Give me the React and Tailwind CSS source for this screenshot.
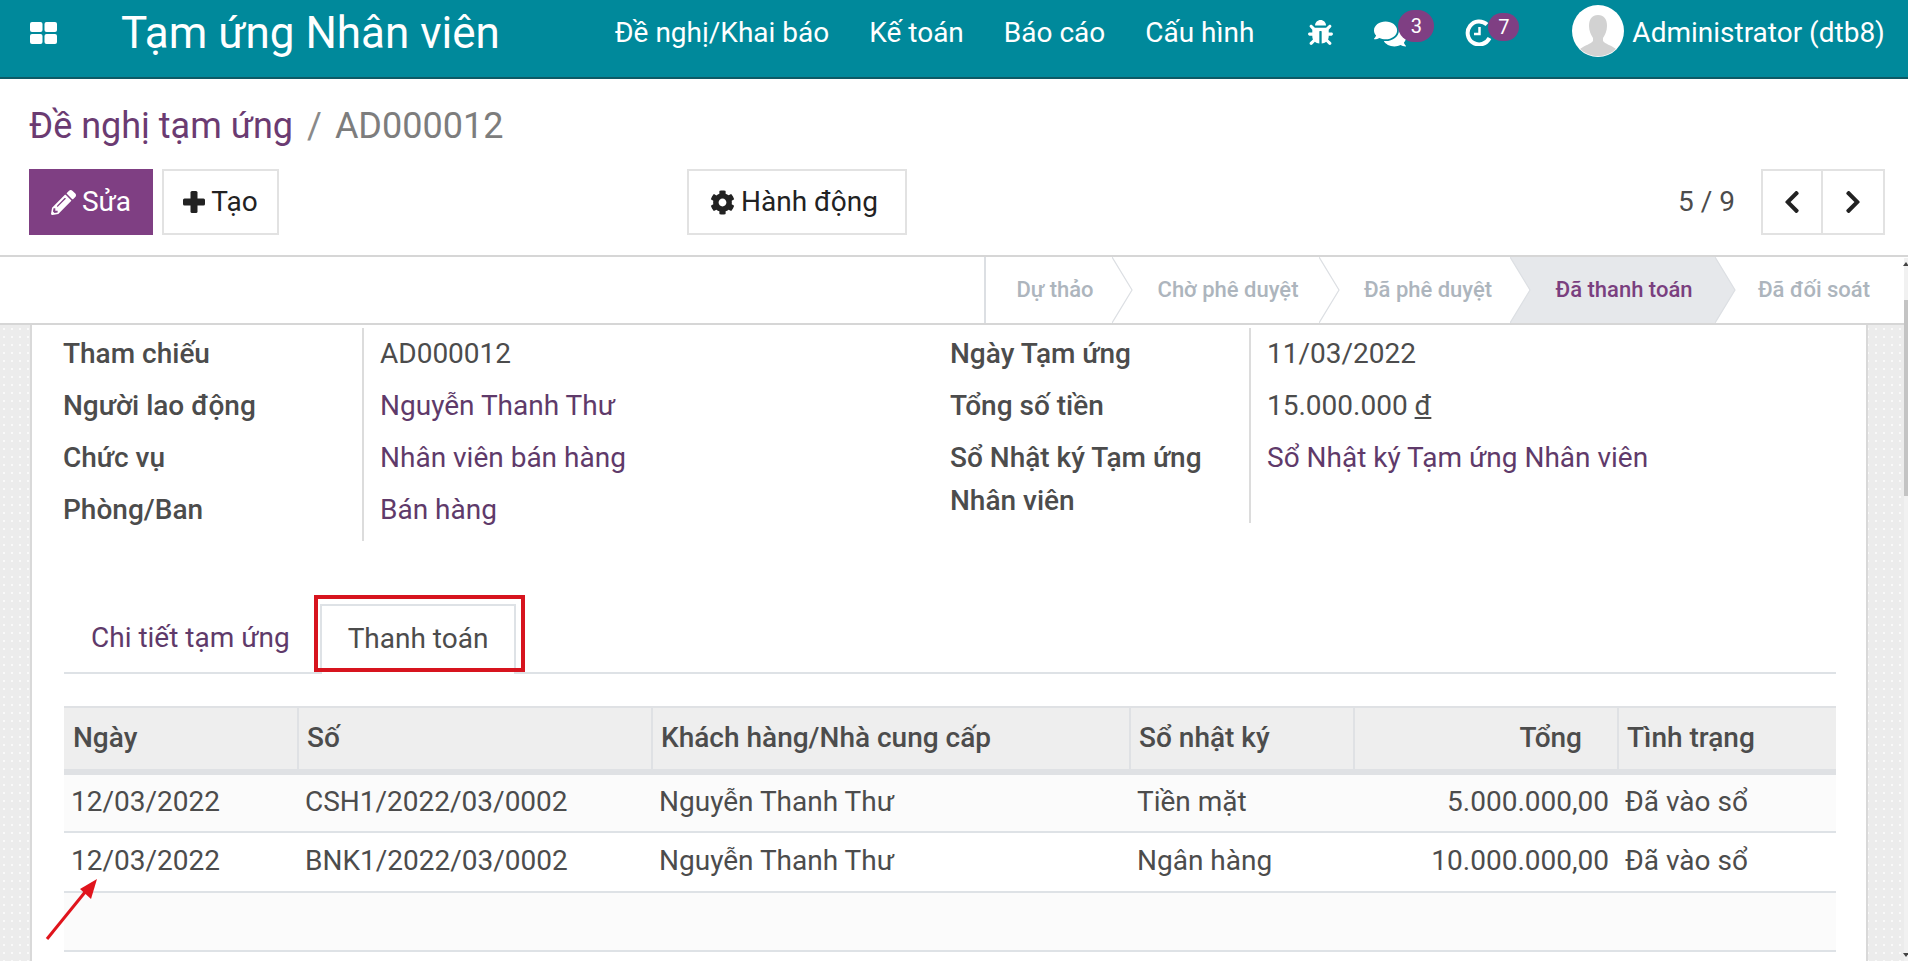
import React from "react";
import { FaPencilAlt, FaCog, FaChevronLeft, FaChevronRight, FaBug, FaComments } from "react-icons/fa";

const Apps = () => (
  <svg width="27" height="22" viewBox="0 0 27 22" fill="#fff">
    <rect x="0" y="0" width="12.5" height="10" rx="2" />
    <rect x="14.5" y="0" width="12.5" height="10" rx="2" />
    <rect x="0" y="12" width="12.5" height="10" rx="2" />
    <rect x="14.5" y="12" width="12.5" height="10" rx="2" />
  </svg>
);

const Clock = () => (
  <svg width="28" height="27" viewBox="0 0 28 27" fill="none" stroke="#fff">
    <path d="M22 5.5 A11.5 11.5 0 1 0 24.5 19" strokeWidth="4" />
    <path d="M14.5 8 V15 H9" strokeWidth="2.5" />
  </svg>
);

const Avatar = () => (
  <svg width="52" height="52" viewBox="0 0 52 52">
    <circle cx="26" cy="26" r="26" fill="#fff" />
    <path d="M26 10c6 0 9 4 9 11 0 5-2 9-4 12v3c2 3 8 4 13 8a26 26 0 0 1-36 0c5-4 11-5 13-8v-3c-2-3-4-7-4-12 0-7 3-11 9-11z" fill="#d2d2d2" />
  </svg>
);

const Plus = () => (
  <svg width="22" height="22" viewBox="0 0 22 22" fill="#222">
    <rect x="7.5" y="0" width="7" height="22" rx="1.5" />
    <rect x="0" y="7.5" width="22" height="7" rx="1.5" />
  </svg>
);

const Arrow = () => (
  <svg className="absolute left-[44px] top-[876px]" width="56" height="66" viewBox="0 0 56 66">
    <path d="M3 63 L46 10" stroke="#e0141c" strokeWidth="3" fill="none" />
    <path d="M53 3 L36 13 L47 23 Z" fill="#e0141c" />
  </svg>
);

const Chevron = ({ fill = "#fff", back = "" }) => (
  <svg className={"shrink-0 " + back} width="21" height="66" viewBox="0 0 21 66">
    <path d="M0 0 L20 33 L0 66 Z" fill={fill} />
    <path d="M0 0 L20 33 L0 66" fill="none" stroke="#dcdfe3" strokeWidth="1.2" />
  </svg>
);

function Nav({ children, className = "" }) {
  return <span className={"text-[28px] text-white " + className}>{children}</span>;
}

function Stage({ children, w, active }) {
  return (
    <div className={"flex items-center justify-center h-full pb-[2px] text-[22px] font-medium " + w + " " + (active ? "bg-[#e6e8eb] text-[#7a3f7f]" : "text-[#adb5bd]")}>
      {children}
    </div>
  );
}

export default function App() {
  const labelRow = "font-medium text-[28px] text-[#4c4c4c] h-[52px] flex items-center";
  const val = "text-[28px] text-[#4c4c4c] h-[52px] flex items-center";
  const lnk = "text-[28px] text-[#5f3a6a] h-[52px] flex items-center";
  return (
    <div className="relative w-[1908px] h-[961px] overflow-hidden bg-white font-['Roboto',sans-serif] text-[#4c4c4c]">
      {/* Top bar */}
      <header className="flex items-center h-[79px] pb-[12px] bg-[#00899b] border-b-2 border-[#0d5a66]">
        <div className="ml-[30px]"><Apps /></div>
        <span className="ml-[64px] text-[44px] text-white">Tạm ứng Nhân viên</span>
        <nav className="ml-[115px] flex items-center gap-[40px]">
          <Nav>Đề nghị/Khai báo</Nav>
          <Nav>Kế toán</Nav>
          <Nav>Báo cáo</Nav>
          <Nav>Cấu hình</Nav>
        </nav>
        <FaBug className="ml-[54px] text-white" size={25} />
        <div className="relative ml-[41px] w-[60px] h-[30px]">
          <FaComments className="text-white" size={32} />
          <span className="absolute left-[24px] top-[-8px] w-[36px] h-[32px] rounded-full bg-[#7f3f83] text-white text-[20px] flex items-center justify-center">3</span>
        </div>
        <div className="relative ml-[31px] w-[54px] h-[27px]">
          <Clock />
          <span className="absolute left-[23px] top-[-6px] w-[31px] h-[28px] rounded-full bg-[#7f3f83] text-white text-[20px] flex items-center justify-center">7</span>
        </div>
        <div className="ml-[53px] mt-[-3px]"><Avatar /></div>
        <Nav className="ml-[8px]">Administrator (dtb8)</Nav>
      </header>

      {/* Control panel */}
      <section className="h-[178px] pl-[29px] pr-[23px] border-b-2 border-[#d6d6d6]">
        <div className="h-[90px] pt-[3px] flex items-center text-[36px]">
          <span className="text-[#6b3b72]">Đề nghị tạm ứng</span>
          <span className="ml-[14px] text-[#8a8a8a]">/</span>
          <span className="ml-[13px] text-[#7d7d7d]">AD000012</span>
        </div>
        <div className="flex items-center h-[66px]">
          <button className="w-[124px] h-full bg-[#7f3f83] text-white text-[28px] flex items-center justify-center gap-[6px]"><FaPencilAlt size={25} />Sửa</button>
          <button className="ml-[9px] w-[117px] h-full border-2 border-[#e2e2e2] text-[28px] text-[#222] flex items-center justify-center gap-[6px]"><Plus />Tạo</button>
          <button className="ml-[408px] w-[220px] h-full pr-[6px] border-2 border-[#e2e2e2] text-[28px] text-[#222] flex items-center justify-center gap-[6px]"><FaCog size={25} />Hành động</button>
          <span className="ml-auto mr-[26px] text-[28px] text-[#4c4c4c]">5 / 9</span>
          <div className="flex w-[124px] h-full border-2 border-[#e2e2e2]">
            <div className="w-[60px] flex items-center justify-center border-r-2 border-[#e2e2e2] text-[#222]"><FaChevronLeft size={26} /></div>
            <div className="flex-1 flex items-center justify-center text-[#222]"><FaChevronRight size={26} /></div>
          </div>
        </div>
      </section>

      {/* Status bar */}
      <section className="flex justify-end h-[68px] border-b-2 border-[#d6d6d6] pr-[6px]">
        <div className="flex h-[66px] border-l-2 border-[#dcdfe3]">
          <Stage w="w-[126px] pl-[12px]">Dự thảo</Stage><Chevron />
          <Stage w="w-[186px] pl-[4px]">Chờ phê duyệt</Stage><Chevron />
          <Stage w="w-[170px] pl-[6px]">Đã phê duyệt</Stage>
          <Chevron fill="#fff" back="bg-[#e6e8eb]" />
          <Stage w="w-[184px] pl-[2px]" active>Đã thanh toán</Stage>
          <Chevron fill="#e6e8eb" />
          <Stage w="w-[166px] pr-[10px]">Đã đối soát</Stage>
        </div>
      </section>

      {/* Sheet area */}
      <main className="h-[636px] bg-[#ececec] bg-[radial-gradient(#f9f9f9_1.5px,transparent_1.5px)] bg-[length:8px_8px] pl-[30px] pr-[40px]">
        <div className="h-full bg-white border-x-2 border-[#d9d9d9] pl-[32px] pr-[30px]">
          <div className="flex pt-[3px] ml-[-1px]">
            <div className="w-[887px] flex">
              <div className="w-[301px] border-r-2 border-[#dcdcdc] h-[213px]">
                <div className={labelRow}>Tham chiếu</div>
                <div className={labelRow}>Người lao động</div>
                <div className={labelRow}>Chức vụ</div>
                <div className={labelRow}>Phòng/Ban</div>
              </div>
              <div className="pl-[16px]">
                <div className={val}>AD000012</div>
                <div className={lnk}>Nguyễn Thanh Thư</div>
                <div className={lnk}>Nhân viên bán hàng</div>
                <div className={lnk}>Bán hàng</div>
              </div>
            </div>
            <div className="flex">
              <div className="w-[301px] border-r-2 border-[#dcdcdc] h-[195px]">
                <div className={labelRow}>Ngày Tạm ứng</div>
                <div className={labelRow}>Tổng số tiền</div>
                <div className="font-medium text-[28px] text-[#4c4c4c] leading-[43px] pt-[4px]">Sổ Nhật ký Tạm ứng<br />Nhân viên</div>
              </div>
              <div className="pl-[16px]">
                <div className={val}>11/03/2022</div>
                <div className={val}>15.000.000&nbsp;<span className="underline">đ</span></div>
                <div className={lnk}>Sổ Nhật ký Tạm ứng Nhân viên</div>
              </div>
            </div>
          </div>

          {/* Tabs */}
          <div className="mt-[63px] h-[70px] border-b-2 border-[#dee2e6] flex text-[28px]">
            <div className="ml-[27px] w-[229px] pb-[1px] flex items-center text-[#5f3a6a]">Chi tiết tạm ứng</div>
            <div className="relative w-[196px] h-[70px] pb-[2px] border-x-2 border-t-2 border-[#dee2e6] bg-white flex items-center justify-center text-[#4c4c4c]">
              Thanh toán
              <div className="absolute left-[-8px] right-[-11px] top-[-11px] bottom-[2px] border-[4px] border-[#d7141e]" />
            </div>
          </div>

          {/* Table */}
          <table className="mt-[32px] w-full table-fixed border-collapse text-[28px] [&_td]:pb-[2px] [&_th]:pb-[2px]">
            <colgroup>
              <col className="w-[234px]" /><col className="w-[354px]" /><col className="w-[478px]" /><col className="w-[224px]" /><col className="w-[264px]" /><col />
            </colgroup>
            <thead>
              <tr className="h-[65px] bg-[#eeeeee] border-t-2 border-b-[6px] border-[#dfe1e4] font-medium">
                <th className="text-left font-medium pl-[9px] border-r-2 border-[#dfe1e4]">Ngày</th>
                <th className="text-left font-medium pl-[8px] border-r-2 border-[#dfe1e4]">Số</th>
                <th className="text-left font-medium pl-[8px] border-r-2 border-[#dfe1e4]">Khách hàng/Nhà cung cấp</th>
                <th className="text-left font-medium pl-[8px] border-r-2 border-[#dfe1e4]">Sổ nhật ký</th>
                <th className="text-right font-medium pr-[35px] border-r-2 border-[#dfe1e4]">Tổng</th>
                <th className="text-left font-medium pl-[8px]">Tình trạng</th>
              </tr>
            </thead>
            <tbody>
              <tr className="h-[60px] border-b-2 border-[#dee2e6] bg-[#fbfbfb]">
                <td className="pl-[7px]">12/03/2022</td><td className="pl-[7px]">CSH1/2022/03/0002</td><td className="pl-[7px]">Nguyễn Thanh Thư</td><td className="pl-[7px]">Tiền mặt</td><td className="text-right pr-[9px]">5.000.000,00</td><td className="pl-[7px]">Đã vào sổ</td>
              </tr>
              <tr className="h-[60px] border-b-2 border-[#dee2e6]">
                <td className="pl-[7px]">12/03/2022</td><td className="pl-[7px]">BNK1/2022/03/0002</td><td className="pl-[7px]">Nguyễn Thanh Thư</td><td className="pl-[7px]">Ngân hàng</td><td className="text-right pr-[9px]">10.000.000,00</td><td className="pl-[7px]">Đã vào sổ</td>
              </tr>
              <tr className="h-[59px] border-b-2 border-[#dee2e6] bg-[#fbfbfb]"><td colSpan={6} /></tr>
            </tbody>
          </table>
        </div>
      </main>

      <Arrow />
      {/* Scrollbar */}
      <div className="absolute right-0 top-[258px] bottom-0 w-[4px] bg-[#f1f1f1] flex flex-col items-center justify-between py-[4px]">
        <span className="w-0 h-0 border-x-[3px] border-x-transparent border-b-[4px] border-b-[#444]" />
        <span className="w-0 h-0 border-x-[3px] border-x-transparent border-t-[4px] border-t-[#444]" />
      </div>
      <div className="absolute right-0 top-[300px] w-[4px] h-[196px] bg-[#c4c4c4]" />
    </div>
  );
}
